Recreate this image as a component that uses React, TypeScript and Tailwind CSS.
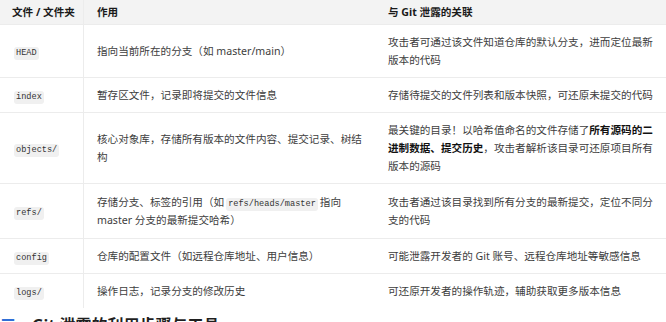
const rows = [
  {
    file: "HEAD",
    role: <>指向当前所在的分支（如 master/main）</>,
    leak: <>攻击者可通过该文件知道仓库的默认分支，进而定位最新版本的代码</>,
  },
  {
    file: "index",
    role: <>暂存区文件，记录即将提交的文件信息</>,
    leak: <>存储待提交的文件列表和版本快照，可还原未提交的代码</>,
  },
  {
    file: "objects/",
    role: <>核心对象库，存储所有版本的文件内容、提交记录、树结构</>,
    leak: (
      <>
        最关键的目录！以哈希值命名的文件存储了
        <strong className="font-bold text-[#111]">所有源码的二进制数据、提交历史</strong>
        ，攻击者解析该目录可还原项目所有版本的源码
      </>
    ),
  },
  {
    file: "refs/",
    role: (
      <>
        存储分支、标签的引用（如<Code>refs/heads/master</Code>指向 master 分支的最新提交哈希）
      </>
    ),
    leak: <>攻击者通过该目录找到所有分支的最新提交，定位不同分支的代码</>,
  },
  {
    file: "config",
    role: <>仓库的配置文件（如远程仓库地址、用户信息）</>,
    leak: <>可能泄露开发者的 Git 账号、远程仓库地址等敏感信息</>,
  },
  {
    file: "logs/",
    role: <>操作日志，记录分支的修改历史</>,
    leak: <>可还原开发者的操作轨迹，辅助获取更多版本信息</>,
  },
];

function Code({ children }: { children: React.ReactNode }) {
  return (
    <code className="mx-[2px] inline-block rounded-[3px] bg-[#f0f0f0] px-[2px] align-baseline font-['Liberation_Mono',monospace] text-[8.6px] leading-[13px] text-[#333]">
      {children}
    </code>
  );
}

export default function App() {
  return (
    <div className="h-[322px] w-[666px] overflow-hidden bg-white font-['Noto_Sans','Noto_Sans_CJK_SC',sans-serif] text-[10.6px] text-[#3d3d3d]">
      <table className="w-[666px] table-fixed border-separate border-spacing-0 overflow-hidden rounded-b-[6px]">
        <colgroup>
          <col className="w-[84px]" />
          <col className="w-[291px]" />
          <col />
        </colgroup>
        <thead>
          <tr className="bg-[#f3f3f3] text-left text-[#1a1a1a]">
            <th className="whitespace-nowrap border-r border-b border-[#ececec] px-3 py-[3px] font-bold leading-[18px]">文件 / 文件夹</th>
            <th className="border-b border-[#ececec] px-[13px] py-[3px] font-bold leading-[18px]">作用</th>
            <th className="border-b border-[#ececec] px-[13px] py-[3px] font-bold leading-[18px]">与 Git 泄露的关联</th>
          </tr>
        </thead>
        <tbody>
          {rows.map((r, i) => (
            <tr key={r.file} className="align-middle">
              <td className={`border-r border-[#ececec] px-3 py-2 leading-[18px] ${i < rows.length - 1 ? "border-b" : ""} ${r.file === "refs/" ? "h-[55px]" : ""}`}>
                <Code>{r.file}</Code>
              </td>
              <td className={`border-[#ececec] px-[13px] py-2 leading-[18px] ${i < rows.length - 1 ? "border-b" : ""}`}>{r.role}</td>
              <td className={`border-[#ececec] px-[13px] py-2 leading-[18px] ${i < rows.length - 1 ? "border-b" : ""}`}>{r.leak}</td>
            </tr>
          ))}
        </tbody>
      </table>
      <h2 className="mt-[7px] text-[16px] font-bold leading-[20px] text-[#1f1f1f]">
        <span className="text-[#2f6fd6]">三</span>、Git 泄露的利用步骤与工具
      </h2>
    </div>
  );
}
